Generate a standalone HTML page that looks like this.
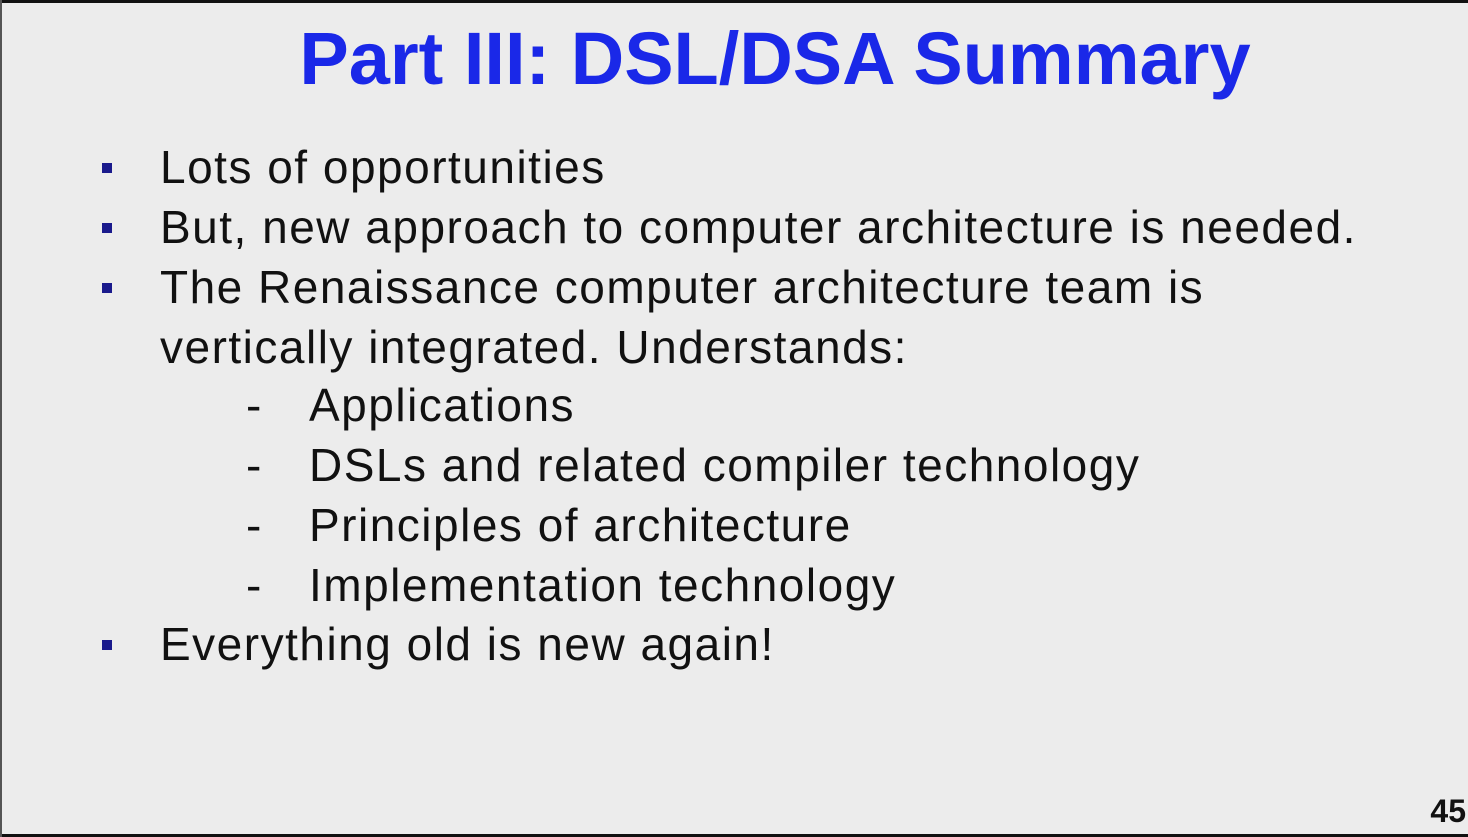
<!DOCTYPE html>
<html><head><style>
html,body{margin:0;padding:0}
body{width:1468px;height:837px;background:#ececec;position:relative;overflow:hidden;font-family:"Liberation Sans",sans-serif}
.top{position:absolute;left:0;top:0;width:1468px;height:3px;background:#111}
.bot{position:absolute;left:0;top:834px;width:1468px;height:3px;background:#111}
.lft{position:absolute;left:0;top:0;width:2px;height:837px;background:#555}
h1{position:absolute;left:0;width:1550px;top:16px;margin:0;text-align:center;font-size:74px;font-weight:bold;color:#1a28e8;line-height:86px}
.l{position:absolute;font-size:46px;color:#111;line-height:52px;white-space:nowrap;letter-spacing:1.5px}
.b{position:absolute;width:10px;height:10px;background:#1a1a8c;left:102px}
.num{position:absolute;right:2px;top:793px;font-size:32px;font-weight:bold;color:#111}
</style></head><body>
<div class="top"></div><div class="bot"></div><div class="lft"></div>
<h1>Part III: DSL/DSA Summary</h1>
<div class="b" style="top:163px"></div>
<div class="l" style="left:160px;top:141px">Lots of opportunities</div>
<div class="b" style="top:223px"></div>
<div class="l" style="left:160px;top:201px">But, new approach to computer architecture is needed.</div>
<div class="b" style="top:283px"></div>
<div class="l" style="left:160px;top:261px">The Renaissance computer architecture team is</div>
<div class="l" style="left:160px;top:321px">vertically integrated. Understands:</div>
<div class="l" style="left:246px;top:379px">-</div><div class="l" style="left:309px;top:379px">Applications</div>
<div class="l" style="left:246px;top:439px">-</div><div class="l" style="left:309px;top:439px">DSLs and related compiler technology</div>
<div class="l" style="left:246px;top:499px">-</div><div class="l" style="left:309px;top:499px">Principles of architecture</div>
<div class="l" style="left:246px;top:559px">-</div><div class="l" style="left:309px;top:559px">Implementation technology</div>
<div class="b" style="top:640px"></div>
<div class="l" style="left:160px;top:618px">Everything old is new again!</div>
<div class="num">45</div>
</body></html>
